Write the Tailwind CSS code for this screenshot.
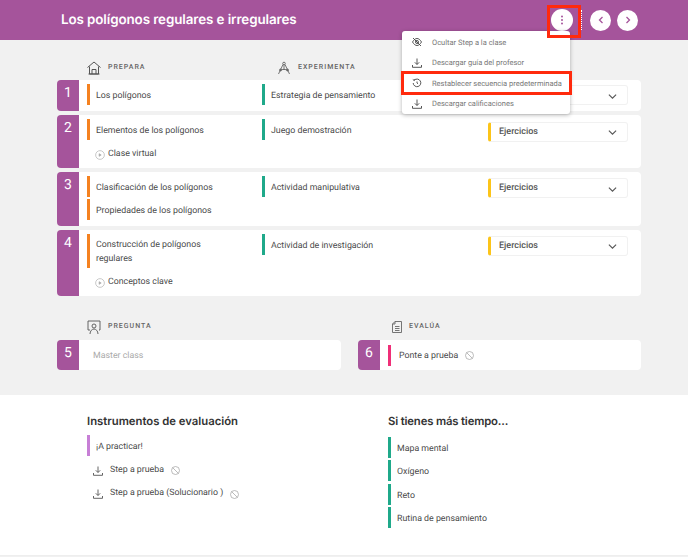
<!DOCTYPE html>
<html lang="es">
  <head>
    <meta charset="UTF-8" />
    <title>Los polígonos regulares e irregulares</title>
    <script src="https://cdn.jsdelivr.net/npm/@tailwindcss/browser@4"></script>
  </head>
  <body class="relative w-[688px] h-[557px] overflow-hidden bg-[#f1f1f1] font-['Roboto',sans-serif] text-[8.800px] text-[#4a4a4a] [text-rendering:geometricPrecision]">
    <!-- Header -->
    <header class="h-10 bg-[#a5549b] flex items-center pl-[61px] pr-[50px]">
      <h1 class="flex-1 pt-[1px] font-['Inter',sans-serif] text-[13.400px] font-semibold tracking-[-0.1px] text-white">Los polígonos regulares e irregulares</h1>
      <button class="w-[22px] h-[22px] rounded-full bg-white flex items-center justify-center">
        <svg class="w-3 h-3 text-[#a5549b]" viewBox="0 0 12 12" fill="currentColor"><circle cx="6" cy="2.5" r="1"/><circle cx="6" cy="6" r="1"/><circle cx="6" cy="9.5" r="1"/></svg>
      </button>
      <div class="h-[20px] mx-[8px] border-l border-dotted border-white"></div>
      <button class="w-[21px] h-[21px] rounded-full bg-white flex items-center justify-center">
        <svg class="w-3 h-3 text-[#a5549b]" viewBox="0 0 12 12" fill="none" stroke="currentColor" stroke-width="1.3"><path d="M7.5 3 4.5 6l3 3"/></svg>
      </button>
      <button class="w-[21px] h-[21px] ml-[6px] rounded-full bg-white flex items-center justify-center">
        <svg class="w-3 h-3 text-[#a5549b]" viewBox="0 0 12 12" fill="none" stroke="currentColor" stroke-width="1.3"><path d="M4.5 3l3 3-3 3"/></svg>
      </button>
    </header>

    <main class="pl-[57px] pr-[47px]">
      <!-- Column titles -->
      <div class="h-10 flex items-center pl-[30px] pt-[15px] text-[7px] font-medium tracking-[1px] text-[#666]">
        <div class="w-[190px] flex items-center gap-[7px]">
          <svg class="w-[14px] h-[14px] text-[#555]" viewBox="0 0 14 14" fill="none" stroke="currentColor" stroke-width="1"><path d="M.5 6.500 7 1l6.500 5.500M2.500 5.500V13h9V5.500M5 13V8.500h4V13M1.500 13h11"/></svg>
          <span>PREPARA</span>
        </div>
        <div class="flex items-center gap-[7px]">
          <svg class="w-[14px] h-[14px] text-[#555]" viewBox="0 0 14 14" fill="none" stroke="currentColor" stroke-width=".8"><circle cx="7" cy="2.500" r="1.300"/><path d="M6 3.500 1.500 13M8 3.500 12.500 13M3 9.500c2-1.500 6-1.500 8 0M7 4v5"/><circle cx="3.500" cy="9" r="1"/><circle cx="10.500" cy="9" r="1"/></svg>
          <span>EXPERIMENTA</span>
        </div>
      </div>

      <!-- Steps -->
      <div class="flex flex-col gap-1">
        <div class="flex h-[31px]">
          <div class="w-[22px] rounded-l-[4px] bg-[#a5549b] text-center text-[14px] leading-[26px] text-white">1</div>
          <div class="flex-1 flex pt-1 bg-white rounded-r-[4px]">
            <div class="w-[183px] pl-[8px]">
              <div class="h-[21px] flex items-center pt-[4px] pl-[6px] border-l-[3px] border-[#f58220]">Los polígonos</div>
            </div>
            <div class="w-[226px]">
              <div class="h-[21px] flex items-center pt-[4px] pl-[6px] border-l-[3px] border-[#1fa98a]">Estrategia de pensamiento</div>
            </div>
            <div class="w-[140px] h-[20px] mt-[1px] flex items-center justify-between pt-[2px] pl-[8px] pr-[10px] rounded-[3px] border-[1.500px] border-[#f1f1f1] border-l-[3px] border-l-[#fcc419] text-[9px] font-medium text-[#555]">
              <span>Ejercicios</span>
              <svg class="w-[9px] h-[9px] text-[#555]" viewBox="0 0 8 8" fill="none" stroke="currentColor" stroke-width="1"><path d="M.8 2.300 4 5.500l3.200-3.200"/></svg>
            </div>
          </div>
        </div>

        <div class="flex h-[53px]">
          <div class="w-[22px] rounded-l-[4px] bg-[#a5549b] text-center text-[14px] leading-[26px] text-white">2</div>
          <div class="flex-1 flex pt-1 bg-white rounded-r-[4px]">
            <div class="w-[183px] pl-[8px] flex flex-col gap-[2px]">
              <div class="h-[21px] flex items-center pt-[4px] pl-[6px] border-l-[3px] border-[#f58220]">Elementos de los polígonos</div>
              <div class="h-[21px] flex items-center pt-[5px] pl-[8px] gap-[3px]">
                <svg class="w-[10px] h-[10px] text-[#aaa]" viewBox="0 0 11 11" fill="none" stroke="currentColor" stroke-width=".7"><circle cx="5.500" cy="5.500" r="4.800"/><path d="M4.500 4v3l2.300-1.500z" fill="currentColor"/></svg>
                <span>Clase virtual</span>
              </div>
            </div>
            <div class="w-[226px]">
              <div class="h-[21px] flex items-center pt-[4px] pl-[6px] border-l-[3px] border-[#1fa98a]">Juego demostración</div>
            </div>
            <div class="w-[140px] h-[20px] mt-[2.500px] flex items-center justify-between pt-[2px] pl-[8px] pr-[10px] rounded-[3px] border-[1.500px] border-[#f1f1f1] border-l-[3px] border-l-[#fcc419] text-[9px] font-medium text-[#555]">
              <span>Ejercicios</span>
              <svg class="w-[9px] h-[9px] text-[#555]" viewBox="0 0 8 8" fill="none" stroke="currentColor" stroke-width="1"><path d="M.8 2.300 4 5.500l3.200-3.200"/></svg>
            </div>
          </div>
        </div>

        <div class="flex h-[54px]">
          <div class="w-[22px] rounded-l-[4px] bg-[#a5549b] text-center text-[14px] leading-[26px] text-white">3</div>
          <div class="flex-1 flex pt-1 bg-white rounded-r-[4px]">
            <div class="w-[183px] pl-[8px] flex flex-col gap-[2px]">
              <div class="h-[21px] flex items-center pt-[4px] pl-[6px] border-l-[3px] border-[#f58220]">Clasificación de los polígonos</div>
              <div class="h-[21px] flex items-center pt-[5px] pl-[6px] border-l-[3px] border-[#f58220]">Propiedades de los polígonos</div>
            </div>
            <div class="w-[226px]">
              <div class="h-[21px] flex items-center pt-[4px] pl-[6px] border-l-[3px] border-[#1fa98a]">Actividad manipulativa</div>
            </div>
            <div class="w-[140px] h-[20px] mt-[2px] flex items-center justify-between pt-[2px] pl-[8px] pr-[10px] rounded-[3px] border-[1.500px] border-[#f1f1f1] border-l-[3px] border-l-[#fcc419] text-[9px] font-medium text-[#555]">
              <span>Ejercicios</span>
              <svg class="w-[9px] h-[9px] text-[#555]" viewBox="0 0 8 8" fill="none" stroke="currentColor" stroke-width="1"><path d="M.8 2.300 4 5.500l3.200-3.200"/></svg>
            </div>
          </div>
        </div>

        <div class="flex h-[66px]">
          <div class="w-[22px] rounded-l-[4px] bg-[#a5549b] text-center text-[14px] leading-[26px] text-white">4</div>
          <div class="flex-1 flex pt-1 bg-white rounded-r-[4px]">
            <div class="w-[183px] pl-[8px] flex flex-col gap-[2px]">
              <div class="h-[34px] flex items-center pt-[3px] pl-[6px] border-l-[3px] border-[#f58220] leading-[13.300px]">Construcción de polígonos<br />regulares</div>
              <div class="h-[21px] flex items-center pt-[5px] pl-[8px] gap-[3px]">
                <svg class="w-[10px] h-[10px] text-[#aaa]" viewBox="0 0 11 11" fill="none" stroke="currentColor" stroke-width=".7"><circle cx="5.500" cy="5.500" r="4.800"/><path d="M4.500 4v3l2.300-1.500z" fill="currentColor"/></svg>
                <span>Conceptos clave</span>
              </div>
            </div>
            <div class="w-[226px]">
              <div class="h-[21px] flex items-center pt-[4px] pl-[6px] border-l-[3px] border-[#1fa98a]">Actividad de investigación</div>
            </div>
            <div class="w-[140px] h-[20px] mt-[1.500px] flex items-center justify-between pt-[2px] pl-[8px] pr-[10px] rounded-[3px] border-[1.500px] border-[#f1f1f1] border-l-[3px] border-l-[#fcc419] text-[9px] font-medium text-[#555]">
              <span>Ejercicios</span>
              <svg class="w-[9px] h-[9px] text-[#555]" viewBox="0 0 8 8" fill="none" stroke="currentColor" stroke-width="1"><path d="M.8 2.300 4 5.500l3.200-3.200"/></svg>
            </div>
          </div>
        </div>
      </div>

      <!-- Pregunta / Evalua -->
      <div class="flex gap-[17px]">
        <div class="w-[284px]">
          <div class="h-11 flex items-center gap-[7px] pl-[30px] pt-[17px] text-[7px] font-medium tracking-[1px] text-[#666]">
            <svg class="w-[14px] h-[14px] text-[#555]" viewBox="0 0 14 14" fill="none" stroke="currentColor" stroke-width=".9"><path d="M3 10H1V1h12v9h-1"/><circle cx="7" cy="6" r="2"/><path d="M3 14c0-3 2-5 4-5s4 2 4 5"/></svg>
            <span>PREGUNTA</span>
          </div>
          <div class="flex h-[30px]">
            <div class="w-[22px] rounded-l-[4px] bg-[#a5549b] text-center text-[14px] leading-[26px] text-white">5</div>
            <div class="flex-1 flex items-center pt-[4px] pl-[14px] bg-white rounded-r-[4px] text-[#aaa]">Master class</div>
          </div>
        </div>
        <div class="w-[283px]">
          <div class="h-11 flex items-center gap-[7px] pl-[34px] pt-[17px] text-[7px] font-medium tracking-[1px] text-[#666]">
            <svg class="w-[10px] h-[12px] text-[#666]" viewBox="0 0 10 12" fill="none" stroke="currentColor" stroke-width=".9"><path d="M3 .5h6.500v11H.5V3zM3 .5V3H.5M3 5.500h4.500M3 7.500h4.500M3 9.500h4.500"/></svg>
            <span>EVALÚA</span>
          </div>
          <div class="flex h-[30px]">
            <div class="w-[22px] rounded-l-[4px] bg-[#a5549b] text-center text-[14px] leading-[26px] text-white">6</div>
            <div class="flex-1 flex items-center gap-[7px] pl-[8px] bg-white rounded-r-[4px]">
              <div class="h-[21px] flex items-center pt-[4px] pl-[8px] border-l-[3px] border-[#ef2f78]">Ponte a prueba</div>
              <svg class="w-[9px] h-[9px] text-[#aaa]" viewBox="0 0 9 9" fill="none" stroke="currentColor" stroke-width=".8"><circle cx="4.500" cy="4.500" r="4"/><path d="M1.700 1.700l5.600 5.600"/></svg>
            </div>
          </div>
        </div>
      </div>
    </main>

    <!-- Bottom -->
    <section class="mt-[25px] h-[161px] flex bg-white border-b border-[#eee] pl-[87px]">
      <div class="w-[301px] pt-[18px]">
        <h2 class="h-4 mb-[6px] font-['Inter',sans-serif] text-[11.300px] leading-4 font-semibold text-[#333]">Instrumentos de evaluación</h2>
        <div class="flex flex-col gap-[2px]">
          <div class="h-[21px] flex items-center pt-[4px] pl-[6px] border-l-[3px] border-[#c77fd6]">¡A practicar!</div>
          <div class="h-[21px] flex items-center pt-[4px] pl-[6px] gap-[7px]">
            <svg class="w-[10px] h-[10px] text-[#555]" viewBox="0 0 10 10" fill="none" stroke="currentColor" stroke-width=".9"><path d="M5 .5v5.800M2.800 4.300 5 6.500l2.200-2.200M.5 7v2.300h9V7"/></svg>
            <span>Step a prueba</span>
            <svg class="w-[9px] h-[9px] text-[#aaa]" viewBox="0 0 9 9" fill="none" stroke="currentColor" stroke-width=".8"><circle cx="4.500" cy="4.500" r="4"/><path d="M1.700 1.700l5.600 5.600"/></svg>
          </div>
          <div class="h-[21px] flex items-center pt-[5px] pl-[6px] gap-[7px]">
            <svg class="w-[10px] h-[10px] text-[#555]" viewBox="0 0 10 10" fill="none" stroke="currentColor" stroke-width=".9"><path d="M5 .5v5.800M2.800 4.300 5 6.500l2.200-2.200M.5 7v2.300h9V7"/></svg>
            <span>Step a prueba (Solucionario )</span>
            <svg class="w-[9px] h-[9px] text-[#aaa]" viewBox="0 0 9 9" fill="none" stroke="currentColor" stroke-width=".8"><circle cx="4.500" cy="4.500" r="4"/><path d="M1.700 1.700l5.600 5.600"/></svg>
          </div>
        </div>
      </div>
      <div class="pt-[18px]">
        <h2 class="h-4 mb-[8px] font-['Inter',sans-serif] text-[11.300px] leading-4 font-semibold tracking-[-0.15px] text-[#333]">Si tienes más tiempo...</h2>
        <div class="flex flex-col gap-[2.300px]">
          <div class="h-[21px] flex items-center pt-[4px] pl-[6px] border-l-[3px] border-[#1fa98a]">Mapa mental</div>
          <div class="h-[21px] flex items-center pt-[4px] pl-[6px] border-l-[3px] border-[#1fa98a]">Oxígeno</div>
          <div class="h-[21px] flex items-center pt-[4px] pl-[6px] border-l-[3px] border-[#1fa98a]">Reto</div>
          <div class="h-[21px] flex items-center pt-[4px] pl-[6px] border-l-[3px] border-[#1fa98a]">Rutina de pensamiento</div>
        </div>
      </div>
    </section>

    <!-- Menu overlay -->
    <div class="absolute left-[402px] top-[31px] w-[168px] h-[83px] py-[1px] bg-white rounded-[3px] shadow-[0_1px_4px_rgba(0,0,0,0.3)] text-[7.500px] text-[#777]">
      <div class="h-[20.500px] flex items-center gap-[10px] pl-[10px] whitespace-nowrap">
        <svg class="w-[10px] h-[10px] text-[#444]" viewBox="0 0 10 10" fill="none" stroke="currentColor" stroke-width=".9"><path d="M.5 5C2 2.500 3.500 1.500 5 1.500S8 2.500 9.500 5C8 7.500 6.500 8.500 5 8.500S2 7.500.5 5z"/><circle cx="5" cy="5" r="1.500"/><path d="M1 1l8 8"/></svg>
        <span>Ocultar Step a la clase</span>
      </div>
      <div class="h-[20.500px] flex items-center gap-[10px] pl-[10px] whitespace-nowrap">
        <svg class="w-[10px] h-[10px] text-[#444]" viewBox="0 0 10 10" fill="none" stroke="currentColor" stroke-width=".9"><path d="M5 .5v5.800M2.800 4.300 5 6.500l2.200-2.200M.5 7v2.300h9V7"/></svg>
        <span>Descargar guía del profesor</span>
      </div>
      <div class="h-[20.500px] flex items-center gap-[10px] pl-[10px] whitespace-nowrap">
        <svg class="w-[10px] h-[10px] text-[#444]" viewBox="0 0 10 10" fill="none" stroke="currentColor" stroke-width=".9"><path d="M2.300 2.200A3.800 3.800 0 1 1 1.200 5M.8 1.500l1.500 1 .8-1.500"/><path d="M5 3.500V5l1 .8"/></svg>
        <span>Restablecer secuencia predeterminada</span>
      </div>
      <div class="h-[20.500px] flex items-center gap-[10px] pl-[10px] whitespace-nowrap">
        <svg class="w-[10px] h-[10px] text-[#444]" viewBox="0 0 10 10" fill="none" stroke="currentColor" stroke-width=".9"><path d="M5 .5v5.800M2.800 4.300 5 6.500l2.200-2.200M.5 7v2.300h9V7"/></svg>
        <span>Descargar calificaciones</span>
      </div>
    </div>

    <!-- Red highlights -->
    <div class="absolute left-[547px] top-[5px] w-[34px] h-[33px] border-[3px] border-[#ff2a0d]"></div>
    <div class="absolute left-[401px] top-[71px] w-[171px] h-[24px] border-[3px] border-[#ff2a0d]"></div>
  </body>
</html>
